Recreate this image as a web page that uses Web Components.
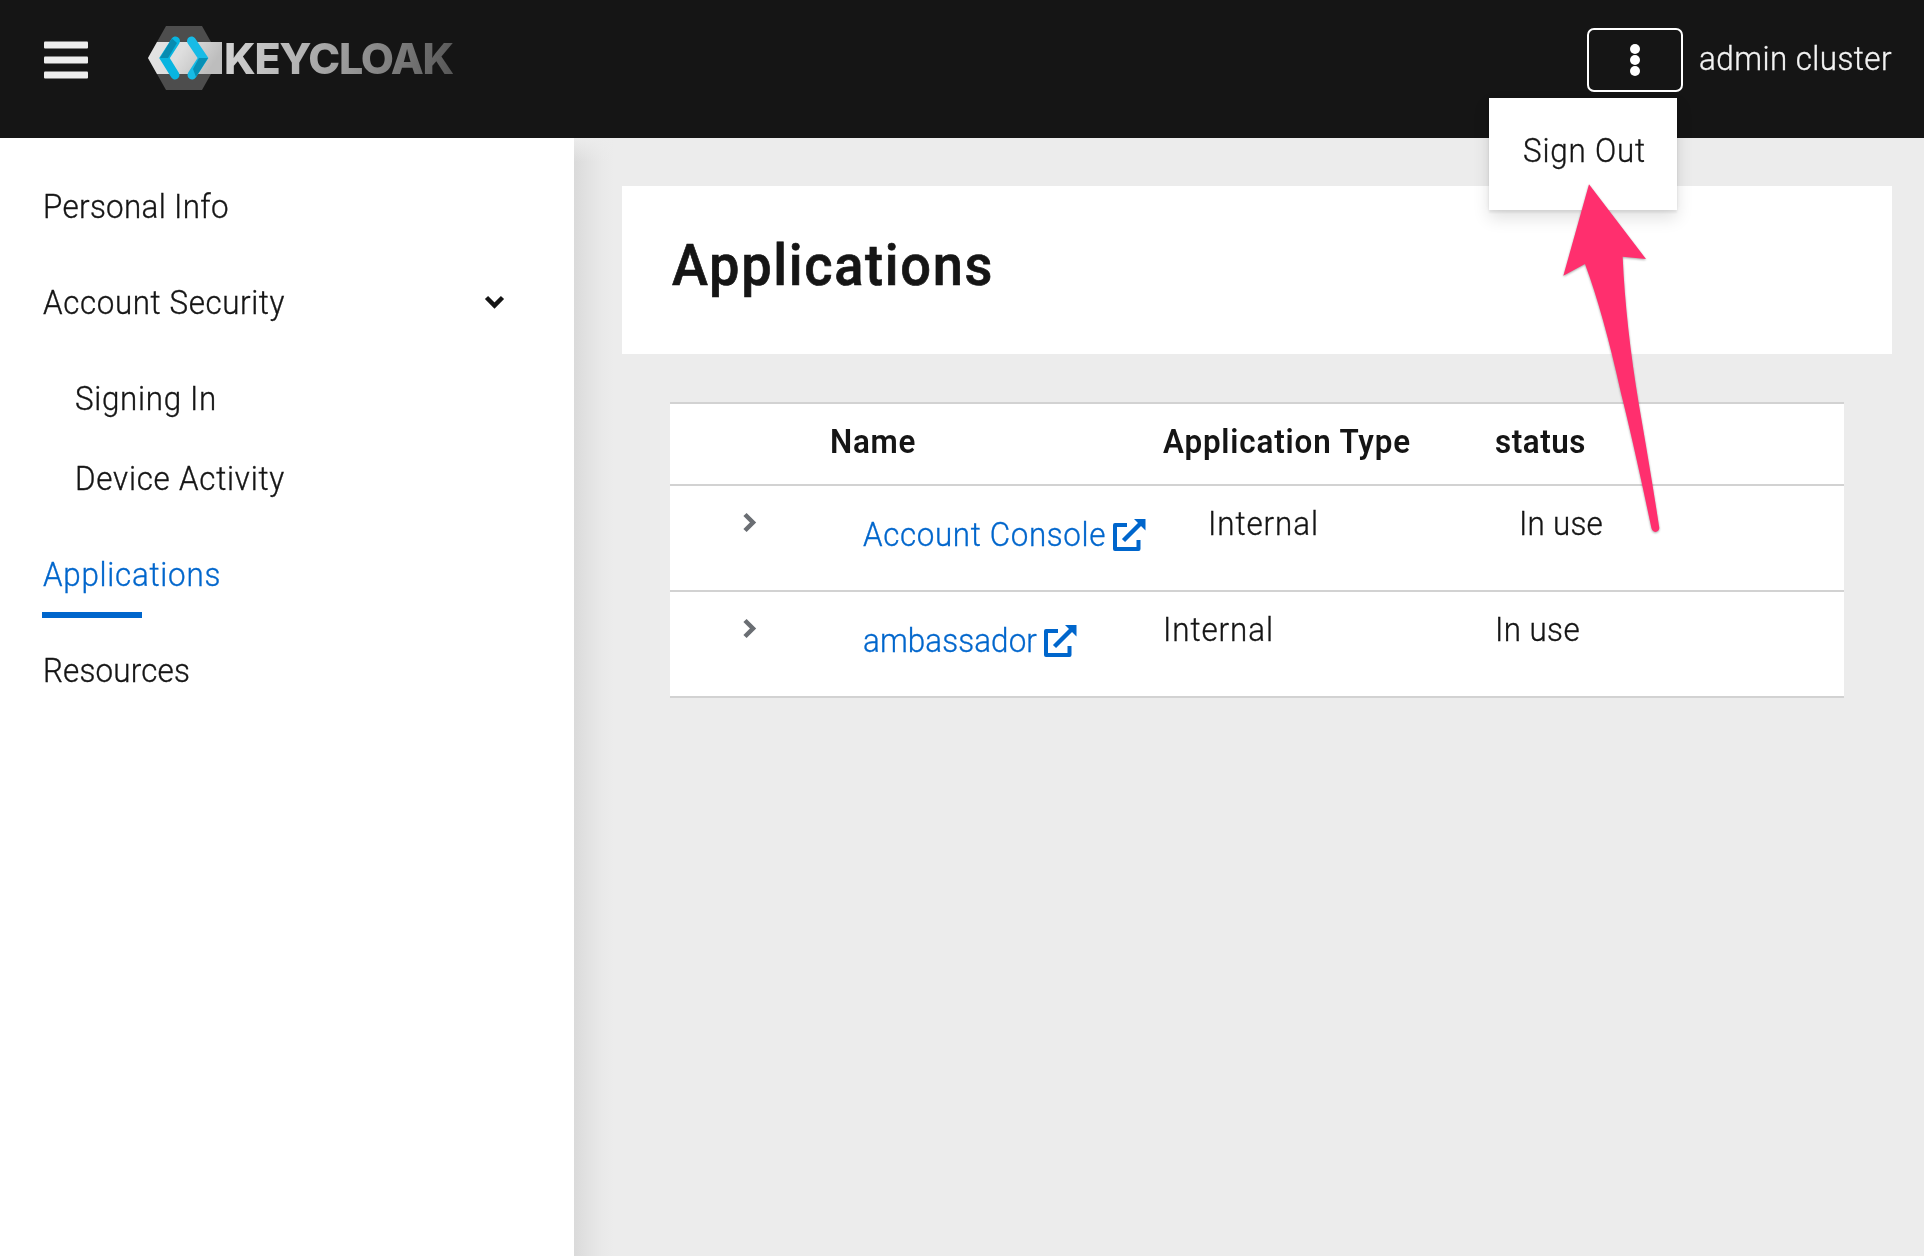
<!DOCTYPE html>
<html lang="en">
<head>
<meta charset="utf-8">
<title>Account Console</title>
<style>
html,body{margin:0;height:100%;overflow:hidden}
body{font-family:Roboto,"Liberation Sans",sans-serif;font-size:33px;line-height:48px;font-weight:300;-webkit-text-stroke:.35px currentColor;color:#151515;background:#ececec}
</style>
</head>
<body>
<kc-app></kc-app>
<script>
function define(name, html, ready) {
  const t = document.createElement('template');
  t.innerHTML = html;
  customElements.define(name, class extends HTMLElement {
    connectedCallback() {
      if (this.shadowRoot) return;
      this.attachShadow({mode: 'open'}).append(t.content.cloneNode(true));
      if (ready) ready(this, this.shadowRoot);
    }
  });
}

/* A single line of text, slightly condensed and tracked to a given width. */
define('kc-text', `<style>
:host{display:inline-block;white-space:nowrap;padding:1px 0 0 1px}
span{display:inline-block;transform-origin:0 50%}
</style><span><slot></slot></span>`, (el, root) => {
  const span = root.querySelector('span');
  const scale = +(el.getAttribute('scale') || .95);
  const target = +el.getAttribute('w') - 1;
  const natural = span.getBoundingClientRect().width;
  el.style.letterSpacing = ((target / scale - natural) / el.textContent.length) + 'px';
  el.style.width = target + 'px';
  if (scale !== 1) span.style.transform = `scaleX(${scale})`;
});

define('kc-logo', `<style>
:host{display:flex;align-items:flex-start;-webkit-text-stroke:0}
svg{display:block}
span{font:800 43px/62px Inter,Lato,sans-serif;margin-left:-1px;background:linear-gradient(100deg,#d4d4d4 0%,#b2b2b2 35%,#8e8e8e 62%,#555 100%);-webkit-background-clip:text;background-clip:text;color:transparent}
</style>
<svg width="76" height="64" viewBox="148 26 76 64">
<defs><linearGradient id="b" x1="0" x2="1" y2=".3"><stop stop-color="#e4e4e4"/><stop offset=".5" stop-color="#dedede"/><stop offset="1" stop-color="#bdbdbd"/></linearGradient></defs>
<path d="M166 26H202L220 58L202 90H166L148 58Z" fill="#4d4d4d"/>
<path d="M157 42H222V74H157L148 58Z" fill="url(#b)"/>
<path d="M175.500 41L164.500 58L175 75" fill="none" stroke="#08b5e0" stroke-width="9" stroke-linecap="round" stroke-linejoin="miter"/>
<path d="M172 38.500L160 58H168L177 43Z" fill="#078bb0"/>
<path d="M191.500 41L203 58L192 75" fill="none" stroke="#17bbe6" stroke-width="9" stroke-linecap="round" stroke-linejoin="miter"/>
<path d="M199 58H208L196 77L193 69Z" fill="#078fb5"/>
</svg>
<span><kc-text w="230" scale="1">KEYCLOAK</kc-text></span>`);

define('kc-kebab', `<style>
:host{display:block;position:relative;width:96px;height:64px}
button{all:unset;box-sizing:border-box;width:96px;height:64px;border:2px solid #fff;border-radius:7px;display:flex;align-items:center;justify-content:center}
.menu{position:absolute;right:6px;top:70px;width:188px;height:112px;box-sizing:border-box;background:#fff;color:#151515;padding:28px 0 0 33px;box-shadow:0 8px 16px rgba(3,3,3,.12),0 0 4px rgba(3,3,3,.07),0 3px 2px rgba(3,3,3,.05);z-index:5}
</style>
<button aria-label="Menu"><svg width="12" height="34" viewBox="0 0 12 34" fill="#fff"><circle cx="6" cy="6" r="5"/><circle cx="6" cy="17" r="5"/><circle cx="6" cy="28" r="5"/></svg></button>
<div class="menu"><slot></slot></div>`);

define('kc-header', `<style>
:host{display:flex;box-sizing:border-box;height:138px;background:#151515;color:#f3f3f3;padding:0 32px 0 44px;align-items:flex-start}
.burger{margin-top:41px;width:44px;height:38px;display:block}
kc-logo{margin:26px 0 0 60px}
kc-kebab{margin:28px 15px 0 auto}
.user{margin-top:34px}
</style>
<svg class="burger" viewBox="0 0 44 38" fill="#ededed"><rect y=".5" width="44" height="7" rx="1"/><rect y="15.500" width="44" height="7" rx="1"/><rect y="30.500" width="44" height="7" rx="1"/></svg>
<kc-logo></kc-logo>
<kc-kebab><kc-text w="124">Sign Out</kc-text></kc-kebab>
<div class="user"><kc-text w="194">admin cluster</kc-text></div>`);

define('kc-nav-item', `<style>
:host{display:block;box-sizing:border-box;height:96px;padding:24px 69px 0 42px}
:host([sub]){height:80px;padding:16px 0 0 74px}
:host([current]){color:#06c}
.row{display:flex;height:48px;justify-content:space-between;align-items:center}
.bar{display:none;width:100px;height:6px;background:#06c;margin-top:14px}
:host([current]) .bar{display:block}
</style><div class="row"><slot></slot><slot name="icon"></slot></div><div class="bar"></div>`);

define('kc-sidebar', `<style>
:host{display:block;box-sizing:border-box;width:574px;flex:none;background:#fff;padding-top:20px;z-index:1;position:relative}
:host::after{content:"";position:absolute;left:100%;top:0;bottom:0;width:40px;background:linear-gradient(#ececec,rgba(236,236,236,0) 24px),linear-gradient(90deg,#dadada,#e2e2e2 35%,#e9e9e9 70%,#ececec)}
.sub{padding:8px 0}
</style>
<kc-nav-item><kc-text w="187">Personal Info</kc-text></kc-nav-item>
<kc-nav-item><kc-text w="243">Account Security</kc-text><svg slot="icon" width="21" height="14" viewBox="0 0 21 14"><path d="M2.500 2.500L10.500 10.500L18.500 2.500" fill="none" stroke="#151515" stroke-width="4.500"/></svg></kc-nav-item>
<div class="sub">
<kc-nav-item sub><kc-text w="143">Signing In</kc-text></kc-nav-item>
<kc-nav-item sub><kc-text w="211">Device Activity</kc-text></kc-nav-item>
</div>
<kc-nav-item current><kc-text w="179">Applications</kc-text></kc-nav-item>
<kc-nav-item><kc-text w="148">Resources</kc-text></kc-nav-item>`);

define('kc-link', `<style>
:host{display:flex;color:#06c}
svg{margin:9px 0 0 7px;flex:none}
</style><slot></slot>
<svg width="33" height="32" viewBox="0 0 33 32"><path d="M14 6H2V30H25.500V21" fill="none" stroke="#06c" stroke-width="4" stroke-linejoin="round"/><path d="M10.500 21.500L28 4" stroke="#06c" stroke-width="4.500"/><path d="M21 0H32.500V11.500Z" fill="#06c"/></svg>`);

define('kc-row', `<style>
:host{display:grid;box-sizing:border-box;height:106px;border-bottom:2px solid #d2d2d2;grid-template-columns:192px 300px 332px 1fr;padding-top:13px;align-items:start}
:host([head]){height:82px;font-weight:600;-webkit-text-stroke:0}
:host([wide]){grid-template-columns:192px 345px 311px 1fr}
.t{padding-left:72px;height:48px;display:flex;align-items:flex-start}
.t svg{margin-top:13px}
:host([head]) .t svg{display:none}
.l{margin-top:11px}
:host([head]) .l{margin:0 0 0 -33px}
</style>
<div class="t"><svg width="15" height="21" viewBox="0 0 15 21"><path d="M3 2.500L11 10.500L3 18.500" fill="none" stroke="#6a6e73" stroke-width="4.500"/></svg></div>
<div class="l"><slot name="name"></slot></div>
<div><slot name="type"></slot></div>
<div><slot name="status"></slot></div>`);

define('kc-table', `<style>:host{display:block;width:1174px;margin:48px 0 0 48px;background:#fff;border-top:2px solid #d2d2d2}</style>
<kc-row head><kc-text slot="name" w="87">Name</kc-text><kc-text slot="type" w="249">Application Type</kc-text><kc-text slot="status" w="92">status</kc-text></kc-row>
<kc-row wide><kc-link slot="name"><kc-text w="244">Account Console</kc-text></kc-link><kc-text slot="type" w="112">Internal</kc-text><kc-text slot="status" w="85">In use</kc-text></kc-row>
<kc-row><kc-link slot="name"><kc-text w="175">ambassador</kc-text></kc-link><kc-text slot="type" w="112">Internal</kc-text><kc-text slot="status" w="86">In use</kc-text></kc-row>`);

define('kc-title', `<style>
:host{display:block;box-sizing:border-box;height:168px;background:#fff;padding:41px 0 0 49px}
h1{margin:0;font-size:57px;line-height:76px;font-weight:500;-webkit-text-stroke:.7px currentColor}
</style><h1><slot></slot></h1>`);

define('kc-arrow', `<style>:host{display:block;position:absolute;left:1540px;top:160px;z-index:10;pointer-events:none}svg{display:block;filter:drop-shadow(0 1px 1px rgba(0,0,0,.35))}</style>
<svg width="160" height="390" viewBox="0 0 480 1170"><path d="M147 73L318 297L248 290Q257 495 297 735Q336 960 358 1104Q357 1115 346 1116Q337 1114 334 1103Q276 830 243 700Q190 460 135 312L70 347Z" fill="#ff2f6e"/></svg>`);

define('kc-app', `<style>
:host{display:flex;flex-direction:column;height:100vh;position:relative}
kc-header{position:relative;z-index:3;flex:none}
.body{display:flex;flex:1}
main{flex:1;padding:48px 32px 0 48px}
</style>
<kc-header></kc-header>
<div class="body"><kc-sidebar></kc-sidebar>
<main><kc-title><kc-text w="323">Applications</kc-text></kc-title><kc-table></kc-table></main></div>
<kc-arrow></kc-arrow>`);
</script>
</body>
</html>
